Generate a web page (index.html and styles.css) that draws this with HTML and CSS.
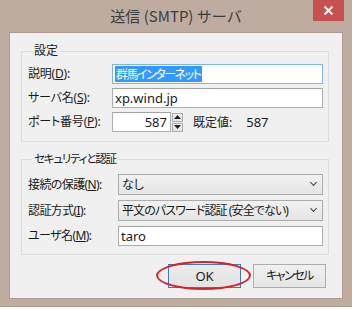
FILE: index.html
```html
<!DOCTYPE html>
<html lang="ja">
<head>
    <meta charset="UTF-8">
    <title>送信 (SMTP) サーバ</title>
    <link rel="stylesheet" href="styles.css">
</head>
<body>
    <div class="window">
        <div class="titlebar">
            <span class="title">送信 (SMTP) サーバ</span>
            <span class="close">
                <svg width="11" height="9" viewBox="0 0 11 9"><path d="M1.5 0.5 L9.5 8.5 M9.5 0.5 L1.5 8.5" stroke="#fff" stroke-width="2"/></svg>
            </span>
        </div>
        <div class="client">
            <fieldset class="group group-server">
                <legend>設定</legend>
                <div class="row">
                    <span class="label">説明(<u>D</u>):</span>
                    <div class="field focused"><span class="selected">群馬インターネット</span></div>
                </div>
                <div class="row">
                    <span class="label">サーバ名(<u>S</u>):</span>
                    <div class="field">xp.wind.jp</div>
                </div>
                <div class="row">
                    <span class="label">ポート番号(<u>P</u>):</span>
                    <div class="field port">587</div>
                    <div class="spin">
                        <span class="spin-btn"><svg width="7" height="4" viewBox="0 0 7 4"><path d="M0 4 L3.5 0 L7 4 Z" fill="#222"/></svg></span>
                        <span class="spin-btn"><svg width="7" height="4" viewBox="0 0 7 4"><path d="M0 0 L3.5 4 L7 0 Z" fill="#222"/></svg></span>
                    </div>
                    <span class="default-value">既定値:<span class="num">587</span></span>
                </div>
            </fieldset>

            <fieldset class="group group-security">
                <legend class="narrow">セキュリティと認証</legend>
                <div class="row">
                    <span class="label">接続の保護(<u>N</u>):</span>
                    <div class="select">なし<span class="chevron"></span></div>
                </div>
                <div class="row">
                    <span class="label">認証方式(<u>I</u>):</span>
                    <div class="select tight">平文のパスワード認証 (安全でない)<span class="chevron"></span></div>
                </div>
                <div class="row">
                    <span class="label">ユーザ名(<u>M</u>):</span>
                    <div class="field">taro</div>
                </div>
            </fieldset>

            <div class="buttons">
                <div class="button default">OK<span class="circle"></span></div>
                <div class="button cancel">キャンセル</div>
            </div>
        </div>
    </div>
</body>
</html>
```

FILE: styles.css
```css
body {
    margin: 0;
    padding: 0;
    background-color: #ffffff;
    font-family: "Noto Sans", "Noto Sans CJK JP", sans-serif;
    font-size: 12px;
    font-feature-settings: "palt";
    color: #1a1a1a;
}
.window {
    position: relative;
    width: 352px;
    height: 307px;
    box-sizing: border-box;
    padding: 0 9px 0 9px;
    background-color: #bfaca0;
    border-bottom: 1px solid #a8978b;
}
.titlebar {
    height: 32px;
    text-align: center;
}
.title {
    display: inline-block;
    padding-top: 5px;
    font-family: "Noto Sans CJK JP", sans-serif;
    font-size: 15px;
    line-height: 22px;
    color: #3c3c3c;
    font-feature-settings: normal;
}
.close {
    position: absolute;
    top: 0;
    right: 8px;
    width: 31px;
    height: 21px;
    background-color: #c75050;
    display: flex;
    align-items: center;
    justify-content: center;
}
.client {
    height: 267px;
    box-sizing: border-box;
    background-color: #f0f0f0;
    border: 1px solid #ad9b8f;
    padding-top: 10px;
}
.group {
    margin: 0 13px 0 11px;
    padding: 5px 5px 9px 6px;
    border: 1px solid #dcdcdc;
}
.group legend {
    margin-left: 4px;
    padding: 0 2px;
    line-height: 16px;
}
.group legend.narrow {
    font-size: 11.5px;
    letter-spacing: -1.2px;
}
.group-security {
    margin-top: 9px;
    padding-top: 7px;
    padding-bottom: 8px;
}
.row {
    display: flex;
    align-items: center;
    height: 20px;
    margin-bottom: 4px;
}
.row:last-child {
    margin-bottom: 0;
}
.group-security .row {
    height: 21px;
    margin-bottom: 5px;
}
.group-security .row:last-child {
    height: 20px;
    margin-bottom: 0;
}
.label {
    width: 84px;
    flex: none;
    white-space: nowrap;
    line-height: 16px;
    letter-spacing: -0.2px;
}
.group-security .label {
    width: 90px;
    letter-spacing: -0.6px;
}
.field {
    flex: 1;
    height: 20px;
    box-sizing: border-box;
    border: 1px solid #abadb3;
    border-top-color: #a3a3a3;
    background-color: #fff;
    padding: 0 2px;
    line-height: 18px;
    font-size: 13px;
    white-space: nowrap;
    overflow: hidden;
}
.field.focused {
    border-color: #7eb4ea;
}
.selected {
    background-color: #3399ff;
    color: #fff;
    font-family: "Noto Sans CJK JP", sans-serif;
    font-size: 12px;
    letter-spacing: -1.5px;
    display: inline-block;
    line-height: 16px;
    padding: 0 2px 0 1px;
}
.field.port {
    flex: none;
    width: 59px;
    text-align: right;
    padding-right: 3px;
}
.spin {
    width: 11px;
    height: 19px;
    margin-left: 1px;
    display: flex;
    flex-direction: column;
    gap: 1px;
}
.spin-btn {
    flex: 1;
    box-sizing: border-box;
    border: 1px solid #acacac;
    background: linear-gradient(#f2f2f2, #e3e3e3);
    display: flex;
    align-items: center;
    justify-content: center;
}
.default-value {
    margin-left: 10px;
    line-height: 16px;
}
.default-value .num {
    margin-left: 14px;
    font-size: 13px;
}
.select {
    position: relative;
    flex: 1;
    height: 21px;
    box-sizing: border-box;
    border: 1px solid #acacac;
    background: linear-gradient(#f2f2f2, #e5e5e5);
    padding: 0 3px;
    line-height: 19px;
    white-space: nowrap;
}
.select.tight {
    letter-spacing: -0.9px;
}
.chevron {
    position: absolute;
    right: 6px;
    top: 5px;
    width: 4px;
    height: 4px;
    border-right: 1.5px solid #444;
    border-bottom: 1.5px solid #444;
    transform: rotate(45deg);
}
.buttons {
    display: flex;
    justify-content: flex-end;
    gap: 12px;
    margin-top: 9px;
    padding-right: 16px;
}
.button {
    position: relative;
    width: 73px;
    height: 24px;
    box-sizing: border-box;
    border: 1px solid #acacac;
    background: linear-gradient(#f0f0f0, #e5e5e5);
    text-align: center;
    line-height: 22px;
}
.button.cancel {
    letter-spacing: -1.5px;
}
.button.default {
    border-color: #3c7fb1;
    background: linear-gradient(#ececec, #e2e2e2);
    font-size: 13px;
}
.circle {
    position: absolute;
    left: -13px;
    top: -4px;
    width: 95px;
    height: 29px;
    box-sizing: border-box;
    border: 2px solid #d4242b;
    border-radius: 50%;
}
```
